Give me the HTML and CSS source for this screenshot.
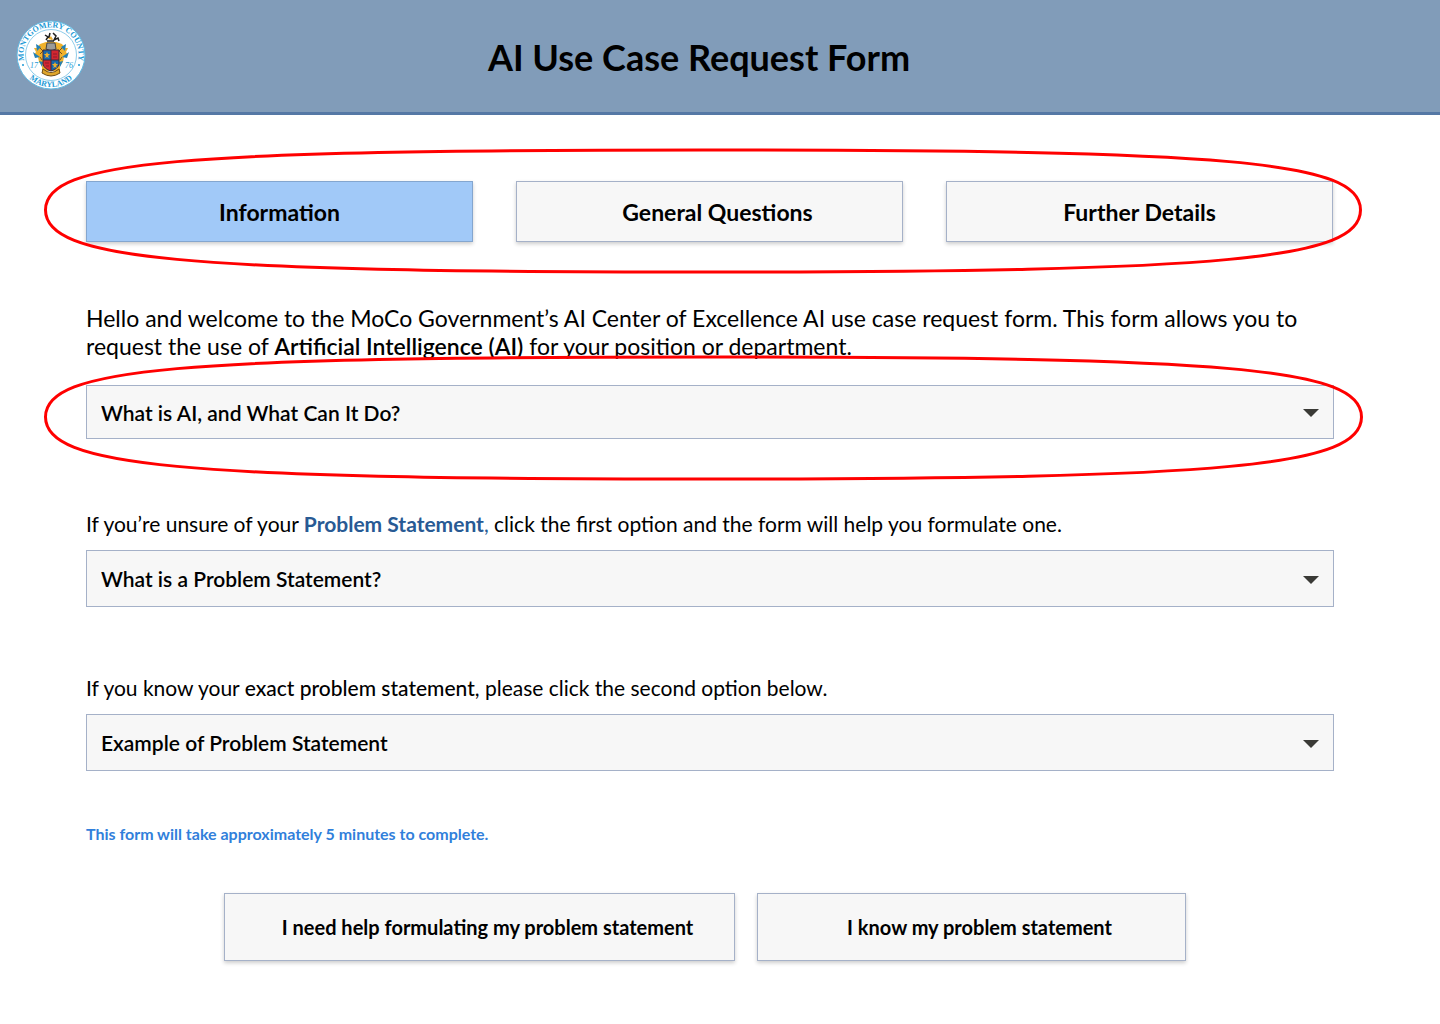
FILE: index.html
```html
<!DOCTYPE html>
<html lang="en">
<head>
    <meta charset="UTF-8">
    <meta name="viewport" content="width=device-width, initial-scale=1.0">
    <title>AI Use Case Request Form</title>
    <link rel="stylesheet" href="styles.css">
</head>
<body>
    <!-- Header with county seal -->
    <header class="header">
        <svg class="seal" viewBox="0 0 70 70" role="img" aria-label="Montgomery County, Maryland seal">
            <defs>
                <path id="arcTop" d="M9.2 44.400a27.500 27.500 0 1 1 51.600 0"/>
                <path id="arcBottom" d="M3 35a32 32 0 0 0 64 0"/>
            </defs>
            <circle cx="35" cy="35" r="34" fill="#fff" stroke="#5fb9e3" stroke-width="1"/>
            <circle cx="35" cy="35" r="25.500" fill="none" stroke="#8fcdea" stroke-width="1"/>
            <g transform="translate(0 -2)">
                <!-- mantling -->
                <path d="M30 24l-6 2-3 4-3 0 2 4-2 3 4 2 1 5 3 4 0 5 18 0 0-5 3-4 1-5 4-2-2-3 2-4-3 0-3-4-6-2z" fill="#f0b12b"/>
                <path d="M20 26l1 7 4-4zM17 34l2 6 5-1zM50 26l-1 7-4-4zM53 34l-2 6-5-1zM23 43l3 6 1-5zM47 43l-3 6-1-5z" fill="#2480b5"/>
                <path d="M24 30l3 3-3 3M46 30l-3 3 3 3M24 39l2 3M46 39l-2 3" fill="none" stroke="#73501e" stroke-width="1"/>
                <!-- helmet and crest -->
                <path d="M31 25h8l1 6-5 2-5-2z" fill="#9b9b98" stroke="#444" stroke-width="1"/>
                <path d="M29 17l3 2-2 3M34 15l-1 4 3 2M37 15l3 3-2 4 4-2 1 3M31 23h7" fill="none" stroke="#202020" stroke-width="1.500"/>
                <path d="M32 21l3-3 2 4z" fill="#f0b12b"/>
                <!-- shield -->
                <path d="M27 32h8v10h-8z" fill="#1768ac"/>
                <path d="M35 32h8v10h-8z" fill="#d22630"/>
                <path d="M27 42h8v11q-7-2-8-7z" fill="#d22630"/>
                <path d="M35 42h8v4q-1 5-8 7z" fill="#1768ac"/>
                <path d="M27 32h16v14q-1 5-8 7-7-2-8-7zM35 32v21M27 42h16" fill="none" stroke="#3d2b3b" stroke-width="1"/>
                <path d="M31 34l1 2h2l-2 2 1 2-2-1-2 1 1-2-2-2h2zM39 44l1 2h2l-2 2 1 2-2-1-2 1 1-2-2-2h2z" fill="#f0b12b"/>
                <path d="M37 36h4M37 39h4M29 45h4M30 48h3" stroke="#8b1d2c" stroke-width="1"/>
                <!-- motto ribbon -->
                <path d="M27 51q8 7 16 0l1 4q-9 6-18 0z" fill="#e0a62b" stroke="#6c4b16" stroke-width="1"/>
            </g>
            <g class="seal-text">
                <text><textPath href="#arcTop" startOffset="50%" text-anchor="middle">MONTGOMERY COUNTY</textPath></text>
                <text><textPath href="#arcBottom" startOffset="50%" text-anchor="middle">MARYLAND</textPath></text>
                <text class="seal-year" x="14" y="48">17</text>
                <text class="seal-year" x="49" y="48">76</text>
            </g>
            <circle cx="7" cy="45" r="1" fill="#1c9ad6"/>
            <circle cx="63" cy="45" r="1" fill="#1c9ad6"/>
        </svg>
        <h1>AI Use Case Request Form</h1>
    </header>

    <main class="content">
        <!-- Form steps -->
        <nav class="tabs">
            <button type="button" class="box-button active">Information</button>
            <button type="button" class="box-button indent">General Questions</button>
            <button type="button" class="box-button">Further Details</button>
            <svg class="ring" viewBox="0 0 1318 126" preserveAspectRatio="none" aria-hidden="true">
                <path d="M1.500 62C1.500 13 133 2 659 2S1316.500 13 1316.500 62 1185 124 659 124 1.500 111 1.500 62z"/>
            </svg>
        </nav>

        <form>
            <label class="intro" for="aboutAi">Hello and welcome to the MoCo Government’s AI Center of Excellence AI use case request form. This form allows you to request the use of <strong>Artificial Intelligence (AI)</strong> for your position or department.</label>
            <div class="dropdown dropdown-short">
                <select id="aboutAi">
                    <option>What is AI, and What Can It Do?</option>
                </select>
                <svg class="ring" viewBox="0 0 1318 126" preserveAspectRatio="none" aria-hidden="true">
                    <path d="M1.500 62C1.500 13 133 2 659 2S1316.500 13 1316.500 62 1185 124 659 124 1.500 111 1.500 62z"/>
                </svg>
            </div>

            <label class="question" for="problem">If you’re unsure of your <span class="term"><strong>Problem Statement</strong>,</span> click the first option and the form will help you formulate one.</label>
            <div class="dropdown">
                <select id="problem">
                    <option>What is a Problem Statement?</option>
                </select>
            </div>

            <label class="question" for="example">If you know your <em>exact problem statement</em>, please click the second option below.</label>
            <div class="dropdown">
                <select id="example">
                    <option>Example of Problem Statement</option>
                </select>
            </div>

            <p class="note">This form will take approximately 5 minutes to complete.</p>

            <div class="actions">
                <button type="button" class="box-button indent">I need help formulating my problem statement</button>
                <button type="button" class="box-button indent">I know my problem statement</button>
            </div>
        </form>
    </main>
</body>
</html>
```
FILE: styles.css
```css
* {
    margin: 0;
    padding: 0;
    box-sizing: border-box;
}

body {
    font-family: Lato, "Open Sans", sans-serif;
    color: #000;
    background: #fff;
}

/* Header */
.header {
    display: grid;
    grid-template-columns: 70px 1fr 70px;
    padding: 20px 58px 22px 16px;
    background: #819cb9;
    border-bottom: 3px solid #5578a5;
}

.header h1 {
    padding-top: 15px;
    font-size: 36px;
    font-weight: 700;
    line-height: 44px;
    text-align: center;
}

.seal {
    display: block;
    width: 70px;
    height: 70px;
}

.seal-text {
    font-family: "Liberation Serif", serif;
    font-size: 8px;
    font-weight: bold;
    fill: #1c9ad6;
}

.seal-year {
    font-style: italic;
    font-weight: normal;
}

/* Page content */
.content {
    padding: 66px 106px 62px 86px;
}

/* Red ring drawn over a section */
.ring {
    position: absolute;
    top: -33px;
    left: -42px;
    width: calc(100% + 71px);
    height: 126px;
    pointer-events: none;
    overflow: visible;
}

.ring path {
    fill: none;
    stroke: #f00;
    stroke-width: 3px;
}

.dropdown .ring {
    top: -30px;
}

/* Buttons */
.box-button {
    font-family: inherit;
    font-weight: 700;
    color: #000;
    background: #f7f7f7;
    border: 1px solid #a5b1c8;
    box-shadow: 0 2px 4px rgba(0, 0, 0, 0.2);
    cursor: pointer;
}

.box-button.active {
    background: #a1c9f8;
    border-color: #84a6cf;
}

.box-button.indent {
    padding-left: 16px;
}

.tabs {
    position: relative;
    display: grid;
    grid-template-columns: repeat(3, 1fr);
    gap: 43px;
    margin: 0 1px 62px 0;
}

.tabs .box-button {
    height: 61px;
    font-size: 23px;
}

/* Form texts */
.intro {
    display: block;
    margin-bottom: 25px;
    font-size: 23px;
    line-height: 28px;
}

.intro strong {
    font-weight: 600;
}

.question {
    display: block;
    margin-bottom: 12px;
    font-size: 21px;
    line-height: 28px;
}

.question em {
    font-style: normal;
    font-weight: 500;
}

.term {
    color: #285a94;
}

/* Dropdowns */
.dropdown {
    position: relative;
    margin-bottom: 67px;
}

.dropdown select {
    display: block;
    width: 100%;
    height: 57px;
    padding: 0 44px 0 14px;
    font-family: inherit;
    font-size: 21px;
    font-weight: 600;
    color: #000;
    background: #f7f7f7;
    border: 1px solid #a5b1c8;
    border-radius: 0;
    appearance: none;
}

.dropdown::after {
    content: "";
    position: absolute;
    top: 50%;
    right: 15px;
    border: 8px solid transparent;
    border-top-color: #3a3a36;
    border-bottom: 0;
    margin-top: -3px;
    pointer-events: none;
}

.dropdown-short {
    margin-bottom: 71px;
}

.dropdown-short select {
    height: 54px;
}

.note {
    margin-top: -16px;
    font-size: 16px;
    font-weight: 700;
    line-height: 24px;
    color: #317fdb;
}

.actions {
    display: grid;
    grid-template-columns: 511fr 429fr;
    gap: 22px;
    margin: 47px 148px 0 138px;
}

.actions .box-button {
    height: 68px;
    font-size: 20px;
}
```
